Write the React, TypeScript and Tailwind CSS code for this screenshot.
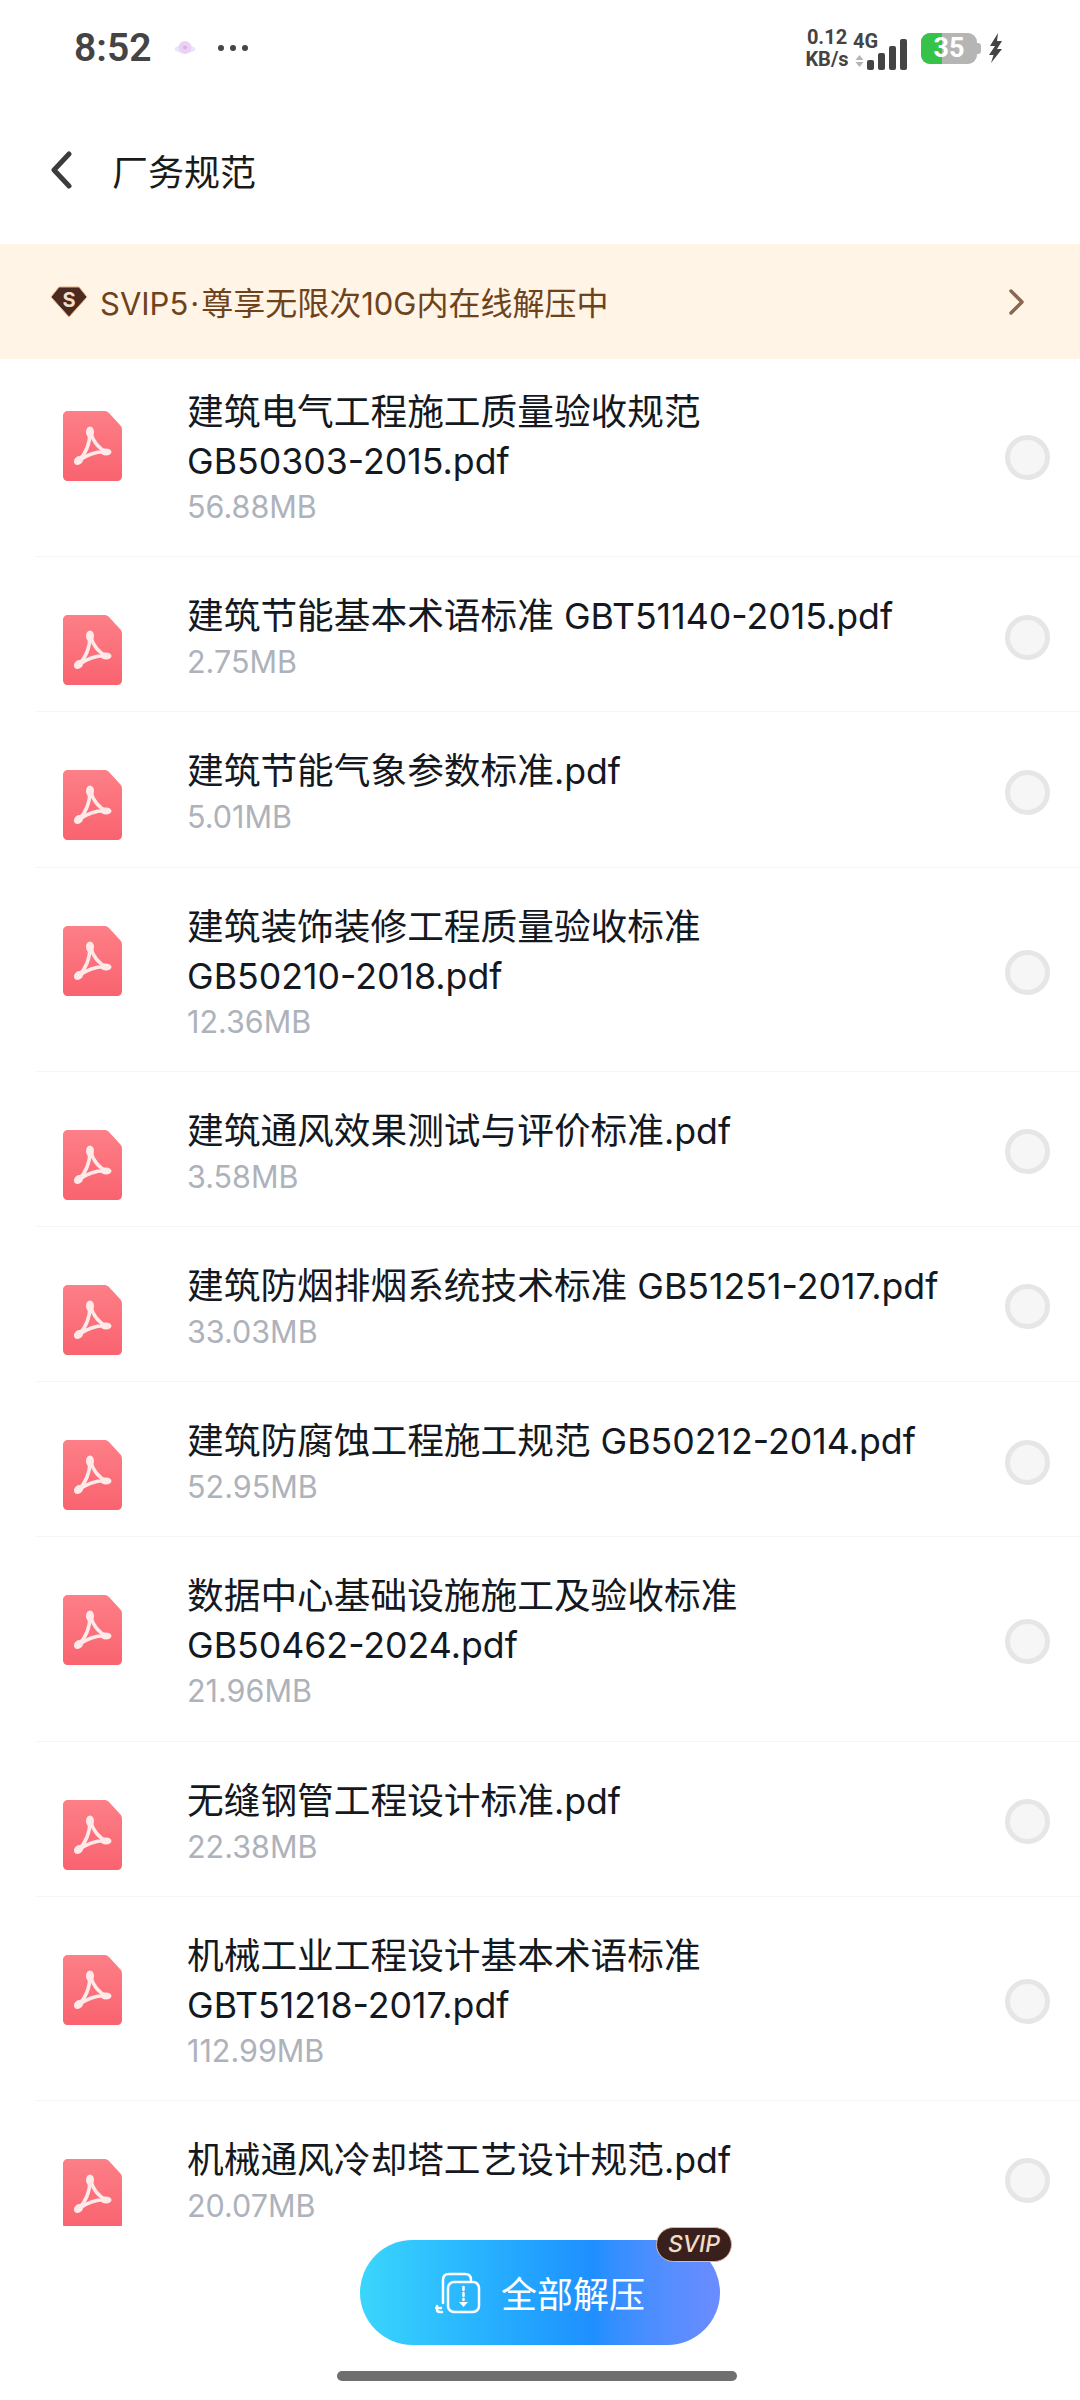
import React from 'react';

const files = [
  { name: ['建筑电气工程施工质量验收规范', 'GB50303-2015.pdf'], size: '56.88MB' },
  { name: ['建筑节能基本术语标准 GBT51140-2015.pdf'], size: '2.75MB' },
  { name: ['建筑节能气象参数标准.pdf'], size: '5.01MB' },
  { name: ['建筑装饰装修工程质量验收标准', 'GB50210-2018.pdf'], size: '12.36MB' },
  { name: ['建筑通风效果测试与评价标准.pdf'], size: '3.58MB' },
  { name: ['建筑防烟排烟系统技术标准 GB51251-2017.pdf'], size: '33.03MB' },
  { name: ['建筑防腐蚀工程施工规范 GB50212-2014.pdf'], size: '52.95MB' },
  { name: ['数据中心基础设施施工及验收标准', 'GB50462-2024.pdf'], size: '21.96MB' },
  { name: ['无缝钢管工程设计标准.pdf'], size: '22.38MB' },
  { name: ['机械工业工程设计基本术语标准', 'GBT51218-2017.pdf'], size: '112.99MB' },
  { name: ['机械通风冷却塔工艺设计规范.pdf'], size: '20.07MB' },
];

// Latin runs are set a touch smaller than the CJK around them
function FileLine({ text }: { text: string }) {
  const parts = text.split(/([\x20-\x7e]+)/).filter(Boolean);
  return (
    <div className="h-[49px] whitespace-nowrap leading-[49px]">
      {parts.map((part, i) =>
        /^[\x20-\x7e]/.test(part) ? (
          <span key={i} className="font-['Inter',sans-serif] text-[35.700px]">{part}</span>
        ) : (
          <span key={i}>{part}</span>
        )
      )}
    </div>
  );
}

function PdfIcon() {
  return (
    <svg width="59" height="70" viewBox="0 0 59 70" className="shrink-0">
      <defs>
        <linearGradient id="pdfGrad" x1="0" y1="0" x2="0" y2="1">
          <stop offset="0" stopColor="#fd7f87" />
          <stop offset="1" stopColor="#f9636f" />
        </linearGradient>
      </defs>
      <path d="M5 0H41C43 0 44.500 .6 46 2L57 14C58.400 15.400 59 17 59 19V65C59 68 57 70 54 70H5C2 70 0 68 0 65V5C0 2 2 0 5 0Z" fill="url(#pdfGrad)" />
      <path
        d="M27 20C27 30 24 42 15 50C24 44 34 40 44 41C36 38 30 30 27 20Z"
        fill="none"
        stroke="#ffe9e9"
        strokeWidth="3.500"
        strokeLinejoin="round"
      />
      <ellipse cx="27" cy="21" rx="4" ry="5.500" fill="#ffe9e9" />
      <ellipse cx="15.500" cy="49.500" rx="5" ry="4" fill="#ffe9e9" transform="rotate(-40 15.500 49.500)" />
      <ellipse cx="43" cy="41" rx="5.500" ry="3.500" fill="#ffe9e9" />
    </svg>
  );
}

function StatusBar() {
  return (
    <div className="flex h-[96px] items-center justify-between pl-[74px] pr-[77px] font-['Roboto',sans-serif] text-[#444444]">
      <div className="flex items-center">
        <span className="text-[39px] font-semibold leading-none">8:52</span>
        <svg width="22" height="16" viewBox="0 0 22 16" className="ml-[23px]">
          <ellipse cx="11" cy="9" rx="10.500" ry="4" fill="#ece4fb" />
          <circle cx="11" cy="7.500" r="6.500" fill="#e6d3f7" />
          <circle cx="11" cy="7.500" r="2" fill="#f4a8d0" />
        </svg>
        <div className="ml-[22px] flex gap-[6px]">
          <span className="h-[6px] w-[6px] rounded-full bg-[#444444]" />
          <span className="h-[6px] w-[6px] rounded-full bg-[#444444]" />
          <span className="h-[6px] w-[6px] rounded-full bg-[#444444]" />
        </div>
      </div>
      <div className="flex items-center">
        <div className="flex w-[44px] flex-col items-center text-[20px] font-bold leading-[22px]">
          <span>0.12</span>
          <span>KB/s</span>
        </div>
        <div className="ml-[4px] flex w-[28px] flex-col items-start">
          <span className="text-[20px] font-bold leading-[22px]">4G</span>
          <svg width="9" height="12" viewBox="0 0 9 12" className="ml-[2px] mt-[3px]">
            <path d="M4.500 0L8.500 5H.5Z M4.500 12L.5 7H8.500Z" fill="#b4b4b4" />
          </svg>
        </div>
        <div className="ml-[-14px] flex h-[32px] items-end gap-[4px] self-end">
          <span className="h-[10px] w-[7px] rounded-[2px] bg-[#444444]" />
          <span className="h-[17px] w-[7px] rounded-[2px] bg-[#444444]" />
          <span className="h-[24px] w-[7px] rounded-[2px] bg-[#444444]" />
          <span className="h-[31px] w-[7px] rounded-[2px] bg-[#444444]" />
        </div>
        <div className="relative ml-[14px] flex h-[31px] w-[56px] overflow-hidden rounded-[9px] bg-[#b5b5b5]">
          <span className="h-full w-[21px] bg-[#37c24a]" />
          <span className="absolute inset-0 flex items-center justify-center text-[27px] font-bold leading-none text-white">35</span>
        </div>
        <span className="h-[11px] w-[4px] rounded-r-[3px] bg-[#b5b5b5]" />
        <svg width="15" height="30" viewBox="0 0 15 30" className="ml-[7px]">
          <path d="M10 0L2 13H7L1 22H5.500L3 30L14 16H9L14 8H9Z" fill="#444444" />
        </svg>
      </div>
    </div>
  );
}

export default function App() {
  return (
    <div className="relative h-[2400px] w-[1080px] overflow-hidden bg-white font-['Noto_Sans_CJK_SC',sans-serif]">
      <StatusBar />

      <div className="flex h-[148px] items-start pl-[50px] pt-[55px]">
        <svg width="22" height="38" viewBox="0 0 22 38">
          <path d="M19 3L4 19L19 35" fill="none" stroke="#3c3c3c" strokeWidth="5" strokeLinecap="round" strokeLinejoin="round" />
        </svg>
        <span className="ml-[40px] text-[36px] leading-[38px] text-[#1a1a1a]">厂务规范</span>
      </div>

      <div className="flex h-[115px] items-center bg-[#fff4e6] pl-[50px] pr-[55px]">
        <svg width="38" height="32" viewBox="0 0 38 32">
          <path d="M9 1H29L37 11L19 31L1 11Z" fill="#4b2a20" stroke="#e9b184" strokeWidth="1" strokeLinejoin="round" />
          <text x="19" y="21" textAnchor="middle" fontSize="20" fontWeight="700" fill="#f6ddc8" fontFamily="Inter, sans-serif">S</text>
        </svg>
        <span className="ml-[12px] flex-1 whitespace-nowrap text-[32px] leading-none text-[#6e431c]">
          <span className="font-['Inter',sans-serif] text-[31px]">SVIP5</span>
          <span className="mx-[2px] font-['Inter',sans-serif] text-[31px]">·</span>
          尊享无限次
          <span className="font-['Inter',sans-serif] text-[31px]">10G</span>
          内在线解压中
        </span>
        <svg width="16" height="26" viewBox="0 0 16 26">
          <path d="M2 2L13 13L2 24" fill="none" stroke="#8a6750" strokeWidth="3.500" strokeLinecap="round" strokeLinejoin="round" />
        </svg>
      </div>

      <div className="h-[1867px] overflow-hidden">
        {files.map((file, i) => (
          <div key={file.size} className={`ml-[36px] flex items-start border-b border-[#f5f5f5] pb-[26.200px] pr-[30px] ${i === 0 ? 'pt-[26px]' : 'pt-[32px]'}`}>
            <div className="ml-[27px] mt-[26px]">
              <PdfIcon />
            </div>
            <div className="ml-[65px] min-w-0 flex-1 pb-[3px] text-[36.700px] text-[#14181f]">
              {file.name.map((line) => (
                <FileLine key={line} text={line} />
              ))}
              <div className="h-[44px] font-['Inter',sans-serif] text-[30.500px] leading-[48px] text-[#adb2bb]">{file.size}</div>
            </div>
            <span className="box-border h-[45px] w-[45px] shrink-0 self-center rounded-full border-[5px] border-[#e6e6e6] bg-[#f6f6f6]" />
          </div>
        ))}
      </div>

      {/* floating action button */}
      <div className="absolute left-[360px] top-[2240px] flex h-[105px] w-[360px] items-center justify-center rounded-full bg-gradient-to-r from-[#3bd6fc] via-[#1f8fff] via-65% to-[#6b8cff]">
        <svg width="46" height="42" viewBox="0 0 46 42" className="mr-[20px]" fill="none" stroke="#ffffff" strokeWidth="2.500" strokeLinecap="round">
          <path d="M8 31V8C8 4 10 2 14 2H30C34 2 36 4 36 8" />
          <rect x="13" y="10" width="31" height="30" rx="6" />
          <path d="M28.500 15V18M28.500 21V24M28.500 27V28" />
          <path d="M24 30H33L28.500 35Z" fill="#ffffff" stroke="none" />
          <path d="M2 34V38C2 40 4 40 7 40M1 36H6" />
        </svg>
        <span className="mt-[-2px] text-[36px] leading-none text-white">全部解压</span>
      </div>
      <div className="absolute left-[656px] top-[2227px] flex h-[35px] w-[76px] items-center justify-center rounded-full border border-[#d9b9a0] bg-[#3a201c] font-['Inter',sans-serif] text-[23px] font-medium italic leading-none text-[#f3dcc4]">
        SVIP
      </div>

      {/* home indicator */}
      <div className="absolute left-[337px] top-[2371px] h-[10px] w-[400px] rounded-full bg-[#6f6f6f]" />
    </div>
  );
}
